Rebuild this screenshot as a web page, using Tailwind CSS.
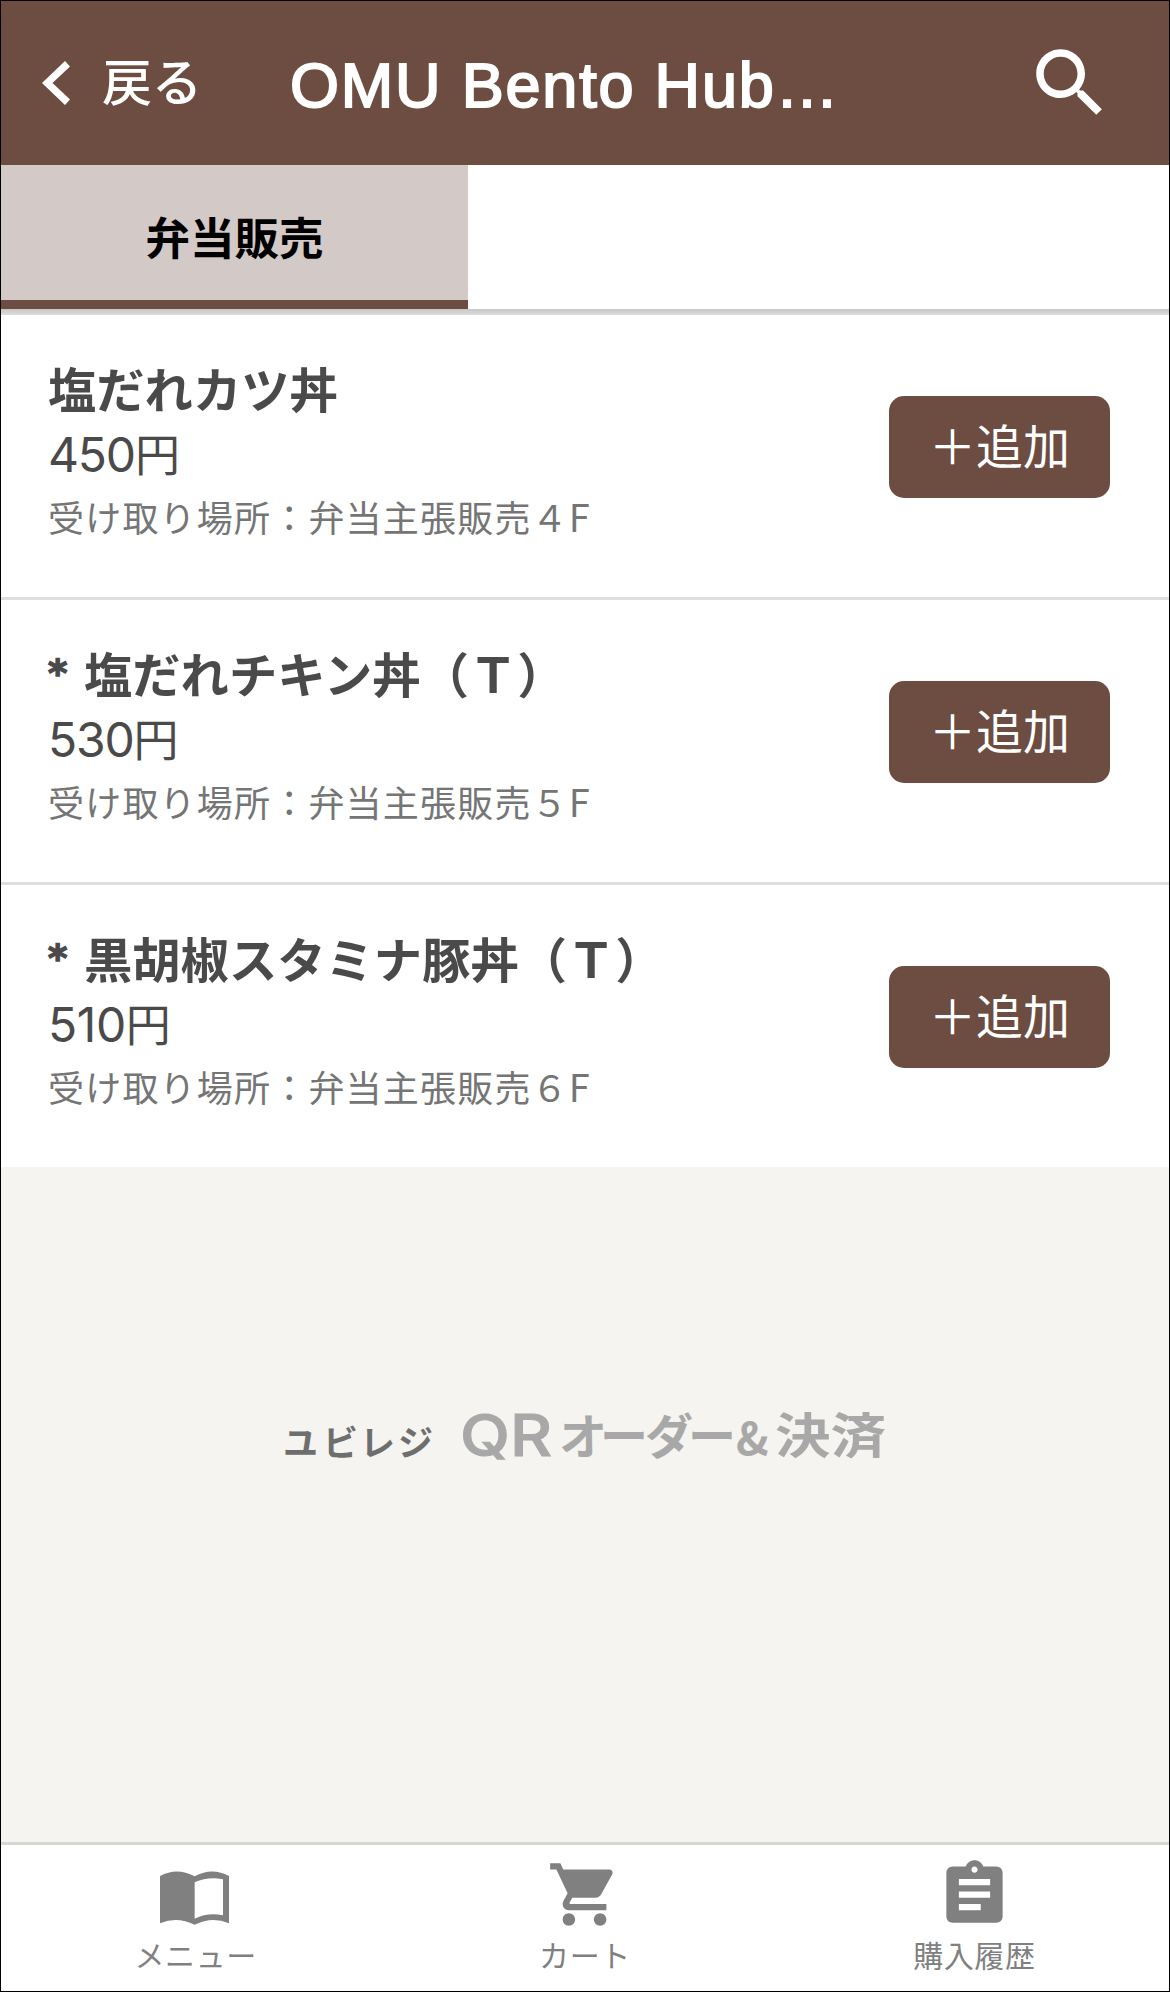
<!DOCTYPE html>
<html lang="ja">
<head>
    <meta charset="UTF-8">
    <meta name="viewport" content="width=device-width, initial-scale=1.0">
    <title>OMU Bento Hub</title>
    <script src="https://cdn.jsdelivr.net/npm/@tailwindcss/browser@4"></script>
</head>
<body class="bg-white font-['Noto_Sans_CJK_JP',sans-serif]">
    <div class="w-[1170px] h-[1992px] border border-black flex flex-col overflow-hidden bg-[#f5f4f0]">
        <!-- Header -->
        <header class="h-[164px] shrink-0 bg-[#6d4c41] text-white flex items-start">
            <a class="flex items-start w-[289px] pl-[41px] pt-[42px]">
                <svg class="w-7 h-11 mt-[18px]" viewBox="0 0 28 44" fill="currentColor"><path d="M23 0L28 5.500L10.500 22L28 38.500L23 44L0 22Z"/></svg>
                <span class="ml-8 text-[50px] leading-[72px] font-medium">戻る</span>
            </a>
            <h1 class="w-[560px] pt-[48px] font-['Liberation_Sans',sans-serif] text-[63px] leading-[72px] tracking-[1.8px] whitespace-nowrap [-webkit-text-stroke:2px_white]">OMU Bento Hub…</h1>
            <svg class="w-[90px] h-[90px] ml-auto mt-[37px] mr-[54px]" viewBox="0 0 24 24" fill="currentColor"><path d="M15.500 14h-.79l-.28-.27C15.410 12.590 16 11.110 16 9.500 16 5.910 13.090 3 9.500 3S3 5.910 3 9.500 5.910 16 9.500 16c1.610 0 3.090-.59 4.230-1.570l.27.28v.79l5 4.990L20.490 19l-4.990-5zm-6 0C7.010 14 5 11.990 5 9.500S7.010 5 9.500 5 14 7.010 14 9.500 11.990 14 9.500 14z"/></svg>
        </header>

        <!-- Tabs -->
        <div class="h-[144px] shrink-0 bg-white">
            <div class="w-[467px] h-full bg-[#d3c9c6] border-b-[9px] border-[#6d4c41] flex items-center justify-center text-[44.5px] leading-[60px] font-bold text-black pt-1.5">弁当販売</div>
        </div>
        <div class="h-[6px] shrink-0 bg-linear-to-b from-[#c6c6c5] to-[#dededd]"></div>

        <!-- Items -->
        <ul class="bg-white shrink-0">
            <li class="h-[285px] border-b-[3px] border-[#dededd] flex justify-between pl-[47px] pr-[59px]">
                <div class="pt-[36px]">
                    <h2 class="h-[72px] text-[48.3px] leading-[72px] font-bold text-[#4a4a4a]">塩だれカツ丼</h2>
                    <p class="mt-0.5 text-[48px] leading-[60px] tracking-[-1.2px] text-[#4a4a4a] font-['Inter','Noto_Sans_CJK_JP',sans-serif]">450<span class="text-[45px]">円</span></p>
                    <p class="text-[36px] leading-[60px] tracking-[1.2px] text-[#757575]">受け取り場所：弁当主張販売４<span class="text-[38px]">F</span></p>
                </div>
                <button class="mt-[81px] pb-1.5 w-[221px] h-[102px] rounded-[15px] bg-[#6d4c41] text-white text-[47px] leading-[60px]">＋追加</button>
            </li>
            <li class="h-[285px] border-b-[3px] border-[#dededd] flex justify-between pl-[47px] pr-[59px]">
                <div class="pt-[36px]">
                    <h2 class="flex h-[72px] text-[48.3px] leading-[72px] font-bold text-[#4a4a4a]"><span class="w-[36px] pt-0.5 font-['DejaVu_Sans',sans-serif] text-[37px] [-webkit-text-stroke:1.5px_#4a4a4a]">*</span>塩だれチキン丼（Ｔ）</h2>
                    <p class="mt-0.5 text-[48px] leading-[60px] tracking-[-1.2px] text-[#4a4a4a] font-['Inter','Noto_Sans_CJK_JP',sans-serif]">530<span class="text-[45px]">円</span></p>
                    <p class="text-[36px] leading-[60px] tracking-[1.2px] text-[#757575]">受け取り場所：弁当主張販売５<span class="text-[38px]">F</span></p>
                </div>
                <button class="mt-[81px] pb-1.5 w-[221px] h-[102px] rounded-[15px] bg-[#6d4c41] text-white text-[47px] leading-[60px]">＋追加</button>
            </li>
            <li class="h-[282px] flex justify-between pl-[47px] pr-[59px]">
                <div class="pt-[36px]">
                    <h2 class="flex h-[72px] text-[48.3px] leading-[72px] font-bold text-[#4a4a4a]"><span class="w-[36px] pt-0.5 font-['DejaVu_Sans',sans-serif] text-[37px] [-webkit-text-stroke:1.5px_#4a4a4a]">*</span>黒胡椒スタミナ豚丼（Ｔ）</h2>
                    <p class="mt-0.5 text-[48px] leading-[60px] tracking-[-0.4px] text-[#4a4a4a] font-['Inter','Noto_Sans_CJK_JP',sans-serif]">510<span class="text-[45px]">円</span></p>
                    <p class="text-[36px] leading-[60px] tracking-[1.2px] text-[#757575]">受け取り場所：弁当主張販売６<span class="text-[38px]">F</span></p>
                </div>
                <button class="mt-[81px] pb-1.5 w-[221px] h-[102px] rounded-[15px] bg-[#6d4c41] text-white text-[47px] leading-[60px]">＋追加</button>
            </li>
        </ul>

        <!-- Service logo -->
        <div class="flex-1 pt-[193px] pl-[279px]">
            <svg class="w-[620px] h-[140px] overflow-visible" viewBox="280 1360 620 140">
                <text class="font-bold" y="1456" font-size="35" fill="#6e6e6e" x="283 323 360 398">ユビレジ</text>
                <text class="font-['Inter',sans-serif] font-medium" y="1456" font-size="57" fill="#a8a8a8" stroke="#a8a8a8" stroke-width="1" x="460" textLength="92" lengthAdjust="spacingAndGlyphs">QR</text>
                <text class="font-bold" y="1454" font-size="48" fill="#a8a8a8" x="559 600 645 688">オーダー</text>
                <text class="font-bold" y="1455" font-size="44" fill="#a8a8a8" x="736">&amp;</text>
                <text class="font-bold" y="1453" font-size="48" fill="#a8a8a8" x="775" textLength="111" lengthAdjust="spacingAndGlyphs">決済</text>
            </svg>
        </div>

        <!-- Bottom nav -->
        <nav class="h-[149px] shrink-0 bg-white border-t-[3px] border-[#d6d6d5] grid grid-cols-3 text-[#808080] text-[30px] leading-[40px] tracking-[0.6px]">
            <a class="flex flex-col items-center pt-3">
                <span class="h-[75px] flex items-center">
                    <svg class="w-[69px] h-[54px] mt-1.5 mr-[3px]" viewBox="180 122 207 162" fill="currentColor" fill-rule="evenodd"><path d="M180 137Q231 109 284 138Q336 109 387 137V279Q336 257 284 283Q231 257 180 279ZM284 156Q325 138 369 147V255Q325 245 284 265Z"/></svg>
                </span>
                <span class="mt-0.5">メニュー</span>
            </a>
            <a class="flex flex-col items-center pt-3">
                <svg class="w-[75px] h-[75px]" viewBox="0 0 24 24" fill="currentColor"><path d="M7 18c-1.100 0-1.990.9-1.990 2S5.900 22 7 22s2-.9 2-2-.9-2-2-2zM1 2v2h2l3.600 7.590-1.350 2.450c-.16.28-.25.61-.25.96 0 1.100.9 2 2 2h12v-2H7.420c-.14 0-.25-.11-.25-.25l.03-.12.9-1.630h7.450c.75 0 1.410-.41 1.750-1.030l3.580-6.490c.08-.14.12-.31.12-.48 0-.55-.45-1-1-1H5.210l-.94-2H1zm16 16c-1.100 0-1.990.9-1.990 2s.89 2 1.990 2 2-.9 2-2-.9-2-2-2z"/></svg>
                <span class="mt-0.5">カート</span>
            </a>
            <a class="flex flex-col items-center pt-3">
                <svg class="w-[75px] h-[75px]" viewBox="0 0 24 24" fill="currentColor"><path d="M19 3h-4.180C14.400 1.840 13.300 1 12 1c-1.300 0-2.400.84-2.820 2H5c-1.100 0-2 .9-2 2v14c0 1.100.9 2 2 2h14c1.100 0 2-.9 2-2V5c0-1.100-.9-2-2-2zm-7 0c.55 0 1 .45 1 1s-.45 1-1 1-1-.45-1-1 .45-1 1-1zm2 14H7v-2h7v2zm3-4H7v-2h10v2zm0-4H7V7h10v2z"/></svg>
                <span class="mt-0.5">購入履歴</span>
            </a>
        </nav>
    </div>
</body>
</html>
